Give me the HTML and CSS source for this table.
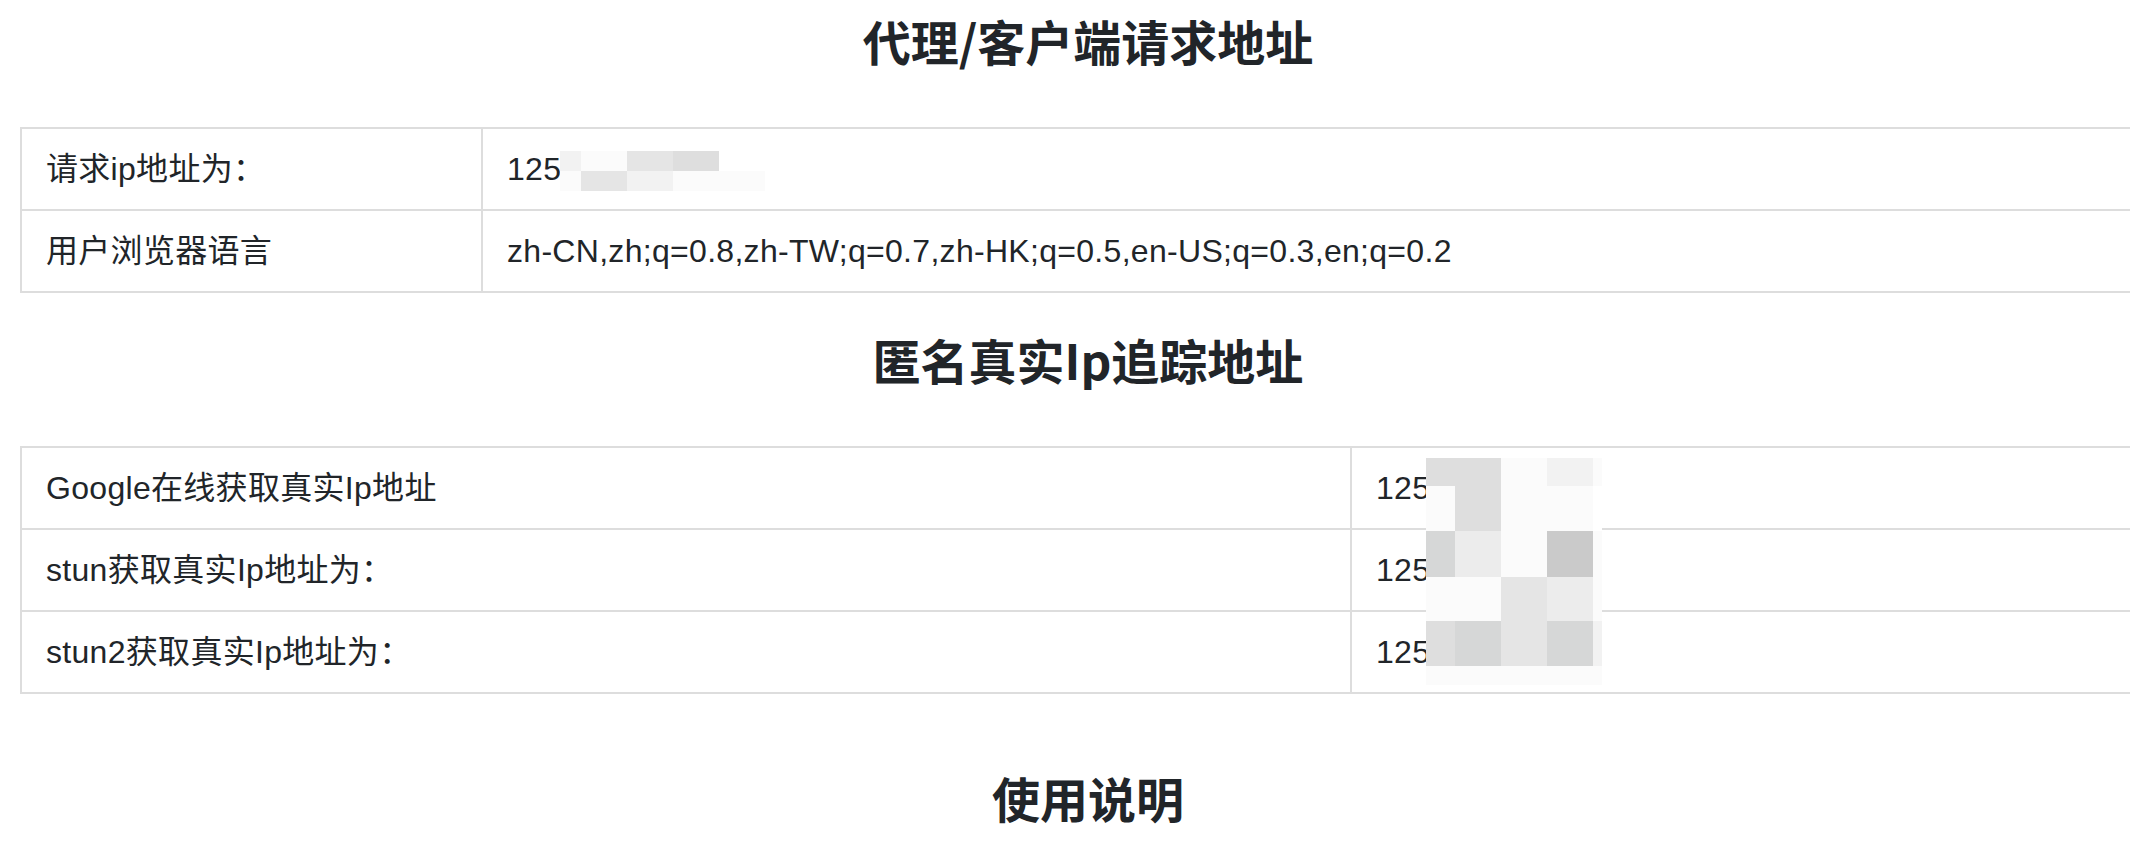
FILE: index.html
```html
<!DOCTYPE html>
<html lang="zh-CN">
<head>
<meta charset="utf-8">
<title>IP 查询</title>
<link rel="stylesheet" href="styles.css">
</head>
<body>
<div class="page">
  <h4 class="section-title first">代理/客户端请求地址</h4>
  <div class="table-wrap">
    <table class="info-table table-a">
      <colgroup><col class="key-col"><col></colgroup>
      <tbody>
        <tr><td>请求ip地址为：</td><td>125</td></tr>
        <tr><td>用户浏览器语言</td><td>zh-CN,zh;q=0.8,zh-TW;q=0.7,zh-HK;q=0.5,en-US;q=0.3,en;q=0.2</td></tr>
      </tbody>
    </table>
    <div class="mosaic mosaic-a" aria-hidden="true">
      <i class="s2"></i><i class="s1"></i><i class="s4"></i><i class="s5"></i><i class="s0"></i>
      <i class="s1"></i><i class="s4"></i><i class="s2"></i><i class="s1"></i><i class="s1"></i>
    </div>
  </div>

  <h4 class="section-title">匿名真实Ip追踪地址</h4>
  <div class="table-wrap">
    <table class="info-table table-b">
      <colgroup><col class="key-col"><col></colgroup>
      <tbody>
        <tr><td>Google在线获取真实Ip地址</td><td>125</td></tr>
        <tr><td>stun获取真实Ip地址为：</td><td>125</td></tr>
        <tr><td>stun2获取真实Ip地址为：</td><td>125</td></tr>
      </tbody>
    </table>
    <div class="mosaic mosaic-b" aria-hidden="true">
      <i class="s5"></i><i class="s5"></i><i class="s1"></i><i class="s2"></i><i class="s1"></i>
      <i class="s1"></i><i class="s5"></i><i class="s1"></i><i class="s1"></i><i class="s0"></i>
      <i class="s6"></i><i class="s3"></i><i class="s1"></i><i class="s7"></i><i class="s1"></i>
      <i class="s1"></i><i class="s1"></i><i class="s4"></i><i class="s3"></i><i class="s1"></i>
      <i class="s5"></i><i class="s6"></i><i class="s4"></i><i class="s6"></i><i class="s2"></i>
      <i class="s1"></i><i class="s1"></i><i class="s1"></i><i class="s1"></i><i class="s1"></i>
    </div>
  </div>

  <h4 class="section-title usage">使用说明</h4>
</div>
</body>
</html>
```

FILE: styles.css
```css
html, body {
  margin: 0;
  padding: 0;
  overflow: hidden;
  background: #ffffff;
}

body {
  font-family: "Liberation Sans", "Noto Sans CJK SC", sans-serif;
  font-size: 32px;
  line-height: 48px;
  letter-spacing: 0.3px;
  color: #212529;
}

.page {
  width: 2136px;
  margin-left: 20px;
}

.section-title {
  margin: 37px 0 58px;
  font-family: "Noto Sans CJK SC", sans-serif;
  font-size: 48px;
  line-height: 58px;
  font-weight: 700;
  letter-spacing: 0;
  text-align: center;
  color: #212529;
}

.section-title.first {
  margin-top: 11px;
}

.section-title.usage {
  margin-top: 74px;
}

.table-wrap {
  position: relative;
}

.info-table {
  width: 100%;
  table-layout: fixed;
  border-collapse: separate;
  border-spacing: 0;
  border-top: 2px solid #dddddd;
  border-left: 2px solid #dddddd;
}

.info-table td {
  padding: 16px 24px;
  border-right: 2px solid #dddddd;
  border-bottom: 2px solid #dddddd;
  white-space: nowrap;
  vertical-align: middle;
}

.table-a .key-col {
  width: 461px;
}

.table-b .key-col {
  width: 1330px;
}

.mosaic {
  position: absolute;
  display: grid;
}

.mosaic i {
  display: block;
}

.mosaic-a {
  left: 540px;
  top: 24px;
  grid-template-columns: 21px 46px 46px 46px 46px;
  grid-template-rows: 20px 20px;
}

.mosaic-b {
  left: 1406px;
  top: 12px;
  grid-template-columns: 29px 46px 46px 46px 9px;
  grid-template-rows: 28px 45px 46px 44px 45px 19px;
}

.s0 { background: #ffffff; }
.s1 { background: #fbfbfb; }
.s2 { background: #f2f2f2; }
.s3 { background: #ececec; }
.s4 { background: #e5e5e5; }
.s5 { background: #dedede; }
.s6 { background: #d6d7d7; }
.s7 { background: #cacaca; }
```
